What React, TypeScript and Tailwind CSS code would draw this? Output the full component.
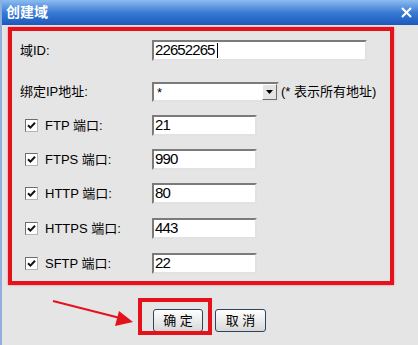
import React from "react";

const font = { fontFamily: '"Liberation Sans", "Noto Sans CJK SC", sans-serif' };

const CheckBox = () => {
  return (
    <div className="w-[13px] h-[13px] bg-white border border-t-[#6d6d6d] border-l-[#6d6d6d] border-r-[#b5b5b5] border-b-[#b5b5b5] flex items-center justify-center shrink-0">
      <svg width="9" height="9" viewBox="0 0 9 9">
        <path d="M1 4.2 L3.4 6.6 L8 1.8" stroke="#111" strokeWidth="2" fill="none" />
      </svg>
    </div>
  );
};

const TextBox = ({ value, width, caret }: { value: string; width: string; caret?: boolean }) => {
  return (
    <div
      className={`${width} h-[21px] bg-white border-2 border-t-[#7b7b7b] border-l-[#7b7b7b] border-r-[#e2e2e2] border-b-[#e2e2e2] flex items-center pl-[1px] text-[15px] tracking-[-0.9px] text-black`}
    >
      {value}
      {caret && <span className="w-[1px] h-[15px] bg-black ml-[2px]"></span>}
    </div>
  );
};

const PortRow = ({ name, port, mt }: { name: string; port: string; mt: string }) => {
  return (
    <div className={`flex items-center ${mt}`}>
      <div className="w-[140px] shrink-0 flex items-center pl-[13px] gap-[7px] text-[13px] text-black">
        <CheckBox />
        <span>{name} 端口:</span>
      </div>
      <TextBox value={port} width="w-[105px]" />
    </div>
  );
};

const App = () => {
  return (
    <div
      className="relative w-[418px] h-[345px] bg-[#e5e5e5] border-l-2 border-[#8fb0dc] overflow-hidden"
      style={font}
    >
      {/* title bar */}
      <div className="h-[25px] bg-gradient-to-b from-[#8cbcf0] via-[#3a7bd4] to-[#1b58bd] flex items-center justify-between pl-[4px] pr-[6px]">
        <span className="text-white font-bold text-[14px]">创建域</span>
        <svg width="11" height="11" viewBox="0 0 11 11">
          <path d="M1 1 L10 10 M10 1 L1 10" stroke="#fff" strokeWidth="2" />
        </svg>
      </div>

      {/* form, outlined in red */}
      <div className="ml-[6px] mt-[2px] w-[386px] h-[258px] border-4 border-[#e3121b] shadow-[0_0_2px_#f07a7f] flex flex-col">
        <div className="flex items-center mt-[9px]">
          <div className="w-[140px] shrink-0 pl-[8px] text-[13px] text-black">域ID:</div>
          <TextBox value="22652265" width="w-[215px]" caret />
        </div>

        <div className="flex items-center mt-[21px]">
          <div className="w-[140px] shrink-0 pl-[8px] text-[13px] text-black">绑定IP地址:</div>
          <div className="w-[127px] h-[20px] bg-white border-2 border-t-[#7b7b7b] border-l-[#7b7b7b] border-r-[#e2e2e2] border-b-[#e2e2e2] flex items-center justify-between">
            <span className="pl-[3px] text-[13px] text-black leading-none">*</span>
            <div className="w-[15px] h-[16px] bg-[#e4e4e4] border border-t-white border-l-white border-r-[#6b6b6b] border-b-[#6b6b6b] flex items-center justify-center">
              <svg width="7" height="4" viewBox="0 0 7 4">
                <path d="M0 0 H7 L3.5 4 Z" fill="#000" />
              </svg>
            </div>
          </div>
          <span className="ml-[2px] text-[13px] text-black">(* 表示所有地址)</span>
        </div>

        <PortRow name="FTP" port="21" mt="mt-[13px]" />
        <PortRow name="FTPS" port="990" mt="mt-[13px]" />
        <PortRow name="HTTP" port="80" mt="mt-[13px]" />
        <PortRow name="HTTPS" port="443" mt="mt-[14px]" />
        <PortRow name="SFTP" port="22" mt="mt-[14px]" />
      </div>

      {/* buttons */}
      <div className="flex gap-[12px] ml-[151px] mt-[24px]">
        <button className="w-[50px] h-[23px] rounded-[3px] border border-[#2a4462] bg-gradient-to-b from-white to-[#d8d8d8] text-[13px] text-black">
          确 定
        </button>
        <button className="w-[51px] h-[23px] rounded-[3px] border border-[#2a4462] bg-gradient-to-b from-white to-[#d8d8d8] text-[13px] text-black">
          取 消
        </button>
      </div>

      {/* red annotation over the OK button */}
      <div className="absolute left-[136px] top-[298px] w-[74px] h-[37px] border-4 border-[#e3121b]"></div>
      <svg className="absolute left-0 top-0" width="418" height="345" viewBox="0 0 418 345">
        <line x1="51" y1="301" x2="118" y2="318" stroke="#e3121b" strokeWidth="2" />
        <path d="M131 322 L113 326 L117 311 Z" fill="#e3121b" />
      </svg>
    </div>
  );
};

export default App;
